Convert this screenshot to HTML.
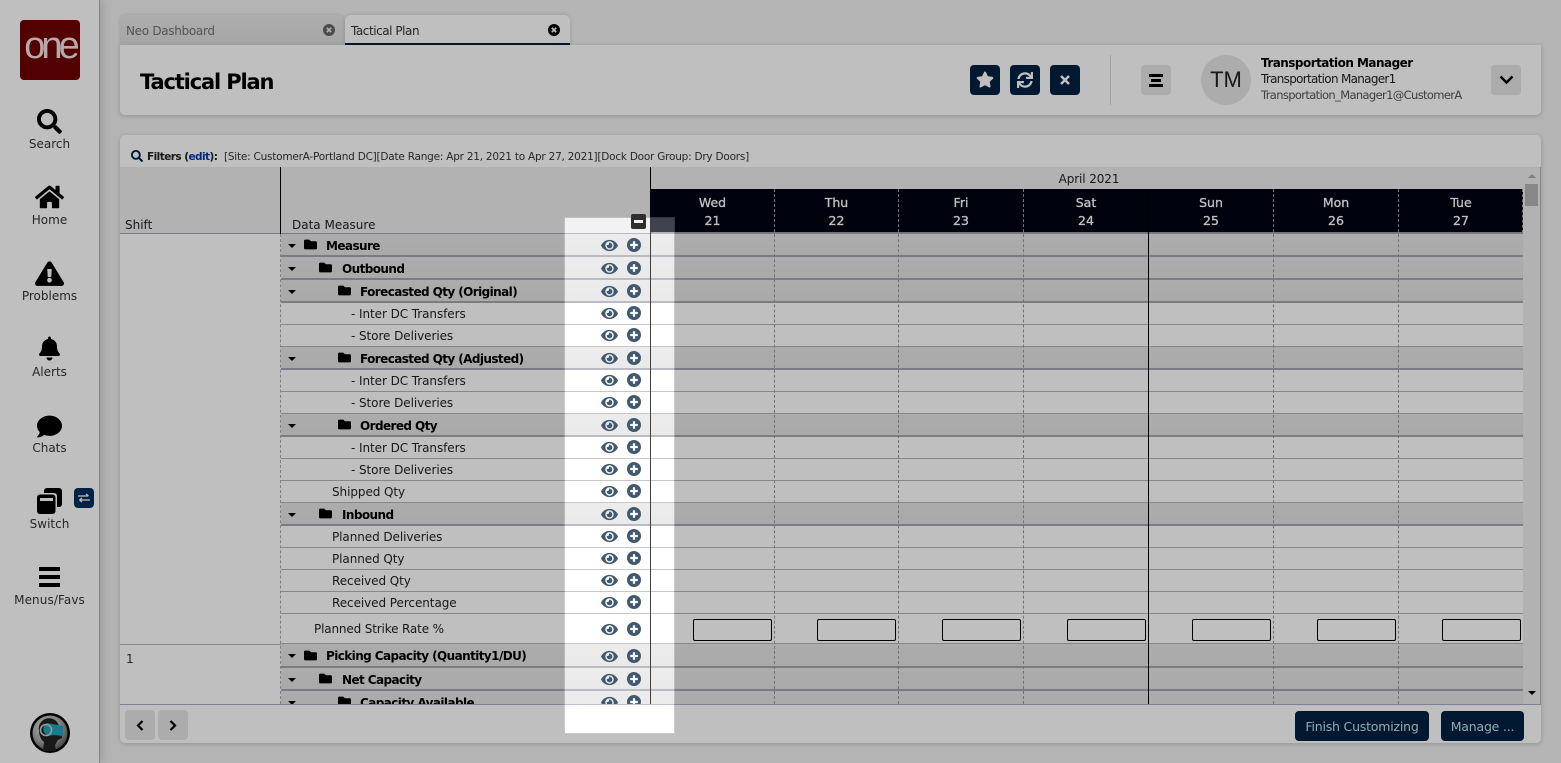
<!DOCTYPE html>
<html><head><meta charset="utf-8"><style>
html,body{margin:0;padding:0;width:1561px;height:763px;overflow:hidden;background:#f0f0f0}
body{position:relative;font-family:"DejaVu Sans","Liberation Sans",sans-serif;font-size:12px;color:#222}
div,svg,b,span,i{position:absolute;box-sizing:border-box}
.nav{left:0;width:99px;text-align:center;color:#333;font-size:12px;line-height:16px}
.ic{fill:#000}
.btn{background:#002040;border-radius:4px;width:30px;height:30px;top:65px}
.gb{background:#e6e6e6;border-radius:4px;width:30px;height:30px}
.r{left:281px;width:1242px;background:#fff;border-bottom:1px solid #b4b4b4;white-space:nowrap;color:#222}
.r span,.r b{top:0;line-height:inherit}
.r span{letter-spacing:-.07px}
.g{background:linear-gradient(#e6e6e6,#e2e2e2);border-bottom:2px solid #a4a4b2}
.g b{color:#000;font-size:12px;letter-spacing:-.58px}
.car{left:7px;width:0;height:0;border:4px solid transparent;border-top:4px solid #000;border-bottom:0}
.ey{left:320px;width:17px;height:15px;fill:#002040}
.pl{left:346px;width:14px;height:14px}
.vl{width:0;top:189px;height:515px;border-left:1px dashed #999}
.ib{top:619px;width:79px;height:22px;border:1px solid #000;border-radius:2px}
.dh{top:189px;height:44px;text-align:center;color:#fff;font-size:12.5px;line-height:18px;padding-top:5px;-webkit-text-stroke:.3px #fff}
</style></head><body>
<svg width="0" height="0" style="left:0;top:0"><defs>
<symbol id="eye" viewBox="0 0 576 512"><path d="M572.52 241.4C518.29 135.59 410.93 64 288 64S57.68 135.64 3.48 241.41a32.35 32.35 0 0 0 0 29.19C57.71 376.41 165.07 448 288 448s230.32-71.64 284.52-177.41a32.35 32.35 0 0 0 0-29.19zM288 400a144 144 0 1 1 144-144 143.93 143.93 0 0 1-144 144zm0-240a95.31 95.31 0 0 0-25.31 3.79 47.85 47.85 0 0 1-66.9 66.9A95.78 95.78 0 1 0 288 160z"/></symbol>
<symbol id="plus" viewBox="0 0 14 14"><circle cx="7" cy="7" r="7" fill="#002040"/><path d="M7 3.2v7.6M3.2 7h7.6" stroke="#fff" stroke-width="2.2"/></symbol>
<symbol id="fold" viewBox="0 0 512 512"><path d="M464 128H272l-64-64H48C21.49 64 0 85.49 0 112v288c0 26.51 21.49 48 48 48h416c26.51 0 48-21.49 48-48V176c0-26.51-21.49-48-48-48z"/></symbol>
</defs></svg>

<!-- sidebar -->
<div style="left:0;top:0;width:100px;height:763px;background:#fff;border-right:1px solid #b0b0b0;box-shadow:3px 0 8px rgba(0,0,0,.12)"></div>
<div style="left:20px;top:20px;width:60px;height:60px;background:#6e0000;border-radius:4px"></div>
<div style="left:20px;top:27px;width:60px;text-align:center;color:#f2e2e2;font-size:38px;line-height:38px;letter-spacing:-4px;font-family:'Liberation Sans',sans-serif">one</div>
<svg class="ic" style="left:37px;top:109px" width="25" height="25" viewBox="0 0 512 512"><path d="M505 442.7L405.3 343c-4.5-4.5-10.6-7-17-7H372c27.6-35.3 44-79.7 44-128C416 93.1 322.9 0 208 0S0 93.1 0 208s93.1 208 208 208c48.3 0 92.7-16.4 128-44v16.3c0 6.4 2.5 12.5 7 17l99.7 99.7c9.4 9.4 24.6 9.4 33.9 0l28.3-28.3c9.4-9.4 9.4-24.6.1-34zM208 336c-70.7 0-128-57.2-128-128 0-70.7 57.2-128 128-128 70.7 0 128 57.2 128 128 0 70.7-57.2 128-128 128z"/></svg>
<div class="nav" style="top:136px">Search</div>
<svg class="ic" style="left:35px;top:184px" width="29" height="26" viewBox="0 0 576 512"><path d="M280.37 148.26L96 300.11V464a16 16 0 0 0 16 16l112.06-.29a16 16 0 0 0 15.92-16V368a16 16 0 0 1 16-16h64a16 16 0 0 1 16 16v95.64a16 16 0 0 0 16 16.05L464 480a16 16 0 0 0 16-16V300L295.67 148.26a12.19 12.19 0 0 0-15.3 0zM571.6 251.47L488 182.56V44.05a12 12 0 0 0-12-12h-56a12 12 0 0 0-12 12v72.61L318.47 43a48 48 0 0 0-61 0L4.34 251.47a12 12 0 0 0-1.6 16.9l25.5 31A12 12 0 0 0 45.15 301l235.22-193.74a12.19 12.19 0 0 1 15.3 0L530.9 301a12 12 0 0 0 16.9-1.6l25.5-31a12 12 0 0 0-1.7-16.93z"/></svg>
<div class="nav" style="top:212px">Home</div>
<svg class="ic" style="left:35px;top:260px" width="29" height="26" viewBox="0 0 576 512"><path d="M569.517 440.013C587.975 472.007 564.806 512 527.94 512H48.054c-36.937 0-59.999-40.055-41.577-71.987L246.423 48.015c18.467-32.009 64.72-31.951 83.154 0l239.94 392zM288 354c-25.405 0-46 20.595-46 46s20.595 46 46 46 46-20.595 46-46-20.595-46-46-46zm-43.673-165.346l7.418 136c.347 6.364 5.609 11.346 11.982 11.346h48.546c6.373 0 11.635-4.982 11.982-11.346l7.418-136c.375-6.874-5.098-12.654-11.982-12.654h-63.383c-6.884 0-12.356 5.78-11.981 12.654z"/></svg>
<div class="nav" style="top:288px">Problems</div>
<svg class="ic" style="left:39px;top:336px" width="21" height="25" viewBox="0 0 448 512"><path d="M224 512c35.32 0 63.97-28.65 63.97-64H160.03c0 35.35 28.65 64 63.97 64zm215.39-149.71c-19.32-20.76-55.47-51.99-55.47-154.29 0-77.7-54.48-139.9-127.94-155.16V32c0-17.67-14.32-32-31.98-32s-31.98 14.33-31.98 32v20.84C118.56 68.1 64.08 130.3 64.08 208c0 102.3-36.15 133.53-55.47 154.29-6 6.45-8.66 14.16-8.61 21.71.11 16.4 12.98 32 32.1 32h383.8c19.12 0 32-15.6 32.1-32 .05-7.55-2.61-15.27-8.61-21.71z"/></svg>
<div class="nav" style="top:364px">Alerts</div>
<svg class="ic" style="left:37px;top:414px" width="25" height="25" viewBox="0 0 512 512"><path d="M256 32C114.6 32 0 125.1 0 240c0 49.6 21.4 95 57 130.7C44.5 421.1 2.7 466 2.2 466.5c-2.2 2.3-2.8 5.7-1.5 8.7S4.8 480 8 480c66.3 0 116-31.8 140.6-51.4 32.7 12.3 69 19.4 107.4 19.4 141.4 0 256-93.1 256-208S397.4 32 256 32z"/></svg>
<div class="nav" style="top:440px">Chats</div>
<svg style="left:37px;top:488px" width="25" height="26" viewBox="0 0 25 26"><rect x="7" y="0" width="18" height="19" rx="3"/><rect x="0" y="5" width="20" height="21" rx="3" fill="#fff"/><rect x="0" y="6.500" width="18.500" height="19.500" rx="3"/><rect x="3" y="10" width="13" height="3" fill="#fff"/></svg>
<div class="nav" style="top:516px">Switch</div>
<div style="left:74px;top:488px;width:20px;height:20px;border-radius:4px;background:#002f5c"></div>
<svg style="left:78px;top:493px" width="12" height="10" viewBox="0 0 12 10" fill="none" stroke="#fff" stroke-width="1.200"><path d="M0 3h10M8 1l2.500 2M12 7H2M4 5L1.500 7M4 9L1.500 7"/></svg>
<svg style="left:39px;top:567px" width="21" height="20"><rect width="21" height="4"/><rect y="8" width="21" height="4"/><rect y="16" width="21" height="4"/></svg>
<div class="nav" style="top:592px;letter-spacing:.1px">Menus/Favs</div>
<svg style="left:30px;top:713px" width="40" height="40" viewBox="0 0 40 40"><defs><radialGradient id="av" cx=".4" cy=".35" r=".7"><stop offset="0" stop-color="#eee"/><stop offset=".6" stop-color="#aaa"/><stop offset="1" stop-color="#555"/></radialGradient></defs><circle cx="20" cy="20" r="20" fill="#050505"/><circle cx="20" cy="20" r="17.500" fill="url(#av)"/><path d="M9 18a10 10 0 0 1 20-5l3 2v10l-4 2-3 5 1 6H13l1-9c-3-2-5-7-5-11z" fill="#222"/><path d="M17 10l16 3v10l-10-1a6.500 6.500 0 0 1-6-12z" fill="#1fa3bd"/><circle cx="16" cy="17" r="5.500" fill="none" stroke="#ccc" stroke-width="1.600"/></svg>

<!-- tabs -->
<div style="left:120px;top:15px;width:224px;height:31px;background:linear-gradient(#e8e8e8,#dcdcdc);border-radius:6px 6px 0 0;box-shadow:0 0 3px rgba(0,0,0,.15)"></div>
<div style="left:126px;top:23px;color:#717171;font-size:12px;line-height:17px;letter-spacing:-.3px">Neo Dashboard</div>
<svg style="left:323px;top:24px" width="12" height="12" viewBox="0 0 12 12"><circle cx="6" cy="6" r="6" fill="#666"/><path d="M3.800 3.800l4.400 4.400M8.200 3.800L3.800 8.200" stroke="#eee" stroke-width="1.700"/></svg>
<div style="left:345px;top:15px;width:225px;height:30px;background:#fff;border-bottom:2px solid #002040;border-radius:6px 6px 0 0;box-shadow:0 0 4px rgba(0,0,0,.15)"></div>
<div style="left:351px;top:23px;color:#333;font-size:12px;line-height:17px;letter-spacing:-.45px">Tactical Plan</div>
<svg style="left:548px;top:24px" width="12" height="12" viewBox="0 0 12 12"><circle cx="6" cy="6" r="6" fill="#000"/><path d="M3.800 3.800l4.400 4.400M8.200 3.800L3.800 8.200" stroke="#fff" stroke-width="1.700"/></svg>

<!-- header panel -->
<div style="left:120px;top:45px;width:1421px;height:70px;background:#fff;border-radius:0 0 5px 5px;box-shadow:0 1px 5px rgba(0,0,0,.18)"></div>
<div style="left:140px;top:67px;font-size:21px;line-height:30px;font-weight:bold;color:#000;letter-spacing:-1.15px">Tactical Plan</div>
<div class="btn" style="left:970px"></div><div class="btn" style="left:1010px"></div><div class="btn" style="left:1050px"></div>
<svg style="left:976px;top:71px" width="18" height="17" viewBox="0 0 576 512" fill="#fff"><path d="M259.3 17.8L194 150.2 47.9 171.5c-26.2 3.8-36.700 36.100-17.700 54.600l105.700 103-25 145.500c-4.500 26.300 23.200 46 46.400 33.700L288 439.600l130.700 68.700c23.200 12.200 50.900-7.400 46.400-33.700l-25-145.500 105.700-103c19-18.500 8.500-50.800-17.700-54.600L382 150.200 316.700 17.800c-11.700-23.600-45.600-23.900-57.400 0z"/></svg>
<svg style="left:1017px;top:72px" width="16" height="16" viewBox="0 0 512 512" fill="#fff"><path d="M440.65 12.57l4 82.77A247.16 247.16 0 0 0 255.83 8C134.73 8 33.91 94.92 12.29 209.82A12 12 0 0 0 24.09 224h49.05a12 12 0 0 0 11.67-9.26 175.91 175.91 0 0 1 317-56.94l-101.46-4.86a12 12 0 0 0-12.57 12v47.41a12 12 0 0 0 12 12H500a12 12 0 0 0 12-12V12a12 12 0 0 0-12-12h-47.37a12 12 0 0 0-11.98 12.57zM255.83 432a175.61 175.61 0 0 1-146-77.8l101.8 4.87a12 12 0 0 0 12.57-12v-47.4a12 12 0 0 0-12-12H12a12 12 0 0 0-12 12V500a12 12 0 0 0 12 12h47.35a12 12 0 0 0 12-12.6l-4.15-82.57A247.17 247.17 0 0 0 255.83 504c121.11 0 221.93-86.92 243.55-201.82a12 12 0 0 0-11.8-14.18h-49.05a12 12 0 0 0-11.67 9.26A175.86 175.86 0 0 1 255.83 432z"/></svg>
<svg style="left:1059px;top:74px" width="12" height="12" viewBox="0 0 12 12"><path d="M2 2l8 8M10 2l-8 8" stroke="#fff" stroke-width="2.600"/></svg>
<div style="left:1110px;top:55px;width:1px;height:50px;background:#d8d8d8"></div>
<div class="gb" style="left:1141px;top:65px"></div>
<svg style="left:1149px;top:74px" width="14" height="13"><rect width="14" height="3"/><rect x="2" y="5" width="10" height="3"/><rect y="10" width="14" height="3"/></svg>
<div style="left:1201px;top:55px;width:50px;height:50px;border-radius:50%;background:#e6e6e6;text-align:center;line-height:50px;font-size:22px;color:#222;font-family:'Liberation Sans',sans-serif">TM</div>
<div style="left:1261px;top:55px;font-size:12px;line-height:17px;font-weight:bold;color:#000;white-space:nowrap;letter-spacing:-.53px">Transportation Manager</div>
<div style="left:1261px;top:71px;font-size:12px;line-height:17px;color:#222;white-space:nowrap;letter-spacing:-.7px">Transportation Manager1</div>
<div style="left:1261px;top:87px;font-size:11.500px;line-height:17px;color:#555;white-space:nowrap;letter-spacing:-.64px">Transportation_Manager1@CustomerA</div>
<div class="gb" style="left:1491px;top:65px"></div>
<svg style="left:1499px;top:75px" width="15" height="10" viewBox="0 0 15 10" fill="none" stroke="#000" stroke-width="2.500"><path d="M1.500 1.500l6 6 6-6"/></svg>

<!-- main panel -->
<div style="left:120px;top:135px;width:1421px;height:608px;background:#fff;border-radius:5px;box-shadow:0 1px 5px rgba(0,0,0,.18)"></div>
<svg style="left:131px;top:150px" width="12" height="12" viewBox="0 0 512 512" fill="#002040"><path d="M505 442.7L405.3 343c-4.500-4.500-10.600-7-17-7H372c27.600-35.300 44-79.700 44-128C416 93.100 322.900 0 208 0S0 93.100 0 208s93.100 208 208 208c48.300 0 92.700-16.400 128-44v16.300c0 6.400 2.500 12.500 7 17l99.700 99.700c9.400 9.400 24.600 9.400 33.900 0l28.300-28.300c9.400-9.400 9.400-24.600.1-34zM208 336c-70.700 0-128-57.200-128-128 0-70.700 57.200-128 128-128 70.700 0 128 57.200 128 128 0 70.700-57.200 128-128 128z"/></svg>
<div style="left:147px;top:149px;font-size:10.500px;line-height:16px;font-weight:bold;color:#222;white-space:nowrap;letter-spacing:-.55px">Filters (<span style="position:static;color:#0033aa">edit</span>):</div>
<div style="left:224px;top:149px;font-size:10.500px;line-height:16px;color:#333;white-space:nowrap;letter-spacing:-.23px">[Site: CustomerA-Portland DC][Date Range: Apr 21, 2021 to Apr 27, 2021][Dock Door Group: Dry Doors]</div>

<!-- table -->
<div style="left:0;top:0;width:1561px;height:763px;clip-path:inset(0 0 59px 0)">
<div style="left:120px;top:167px;width:1403px;height:67px;background:#eee;border-bottom:1px solid #a6a6b0"></div>
<div style="left:653px;top:171px;width:872px;text-align:center;font-size:12px;line-height:17px;color:#222;letter-spacing:-.1px">April 2021</div>
<div style="left:651px;top:189px;width:872px;height:44px;background:#000513;border-bottom:1px solid #999"></div>
<div class="dh" style="left:651px;width:123px">Wed<br>21</div>
<div class="dh" style="left:775px;width:123px">Thu<br>22</div>
<div class="dh" style="left:899px;width:124px">Fri<br>23</div>
<div class="dh" style="left:1024px;width:124px">Sat<br>24</div>
<div class="dh" style="left:1149px;width:124px">Sun<br>25</div>
<div class="dh" style="left:1274px;width:124px">Mon<br>26</div>
<div class="dh" style="left:1399px;width:124px">Tue<br>27</div>
<div style="left:125px;top:217px;line-height:17px;color:#222">Shift</div>
<div style="left:292px;top:217px;line-height:17px;color:#222">Data Measure</div>
<div style="left:126px;top:651px;line-height:17px;color:#333">1</div>

<div class="r g" style="top:234px;height:23px;line-height:24px"><i class="car" style="top:10px"></i><svg fill="#000" style="left:23px;top:4px" width="13" height="13"><use href="#fold"/></svg><b style="left:45px">Measure</b><svg class="ey" style="top:3.500px"><use href="#eye"/></svg><svg class="pl" style="top:4px"><use href="#plus"/></svg></div>
<div class="r g" style="top:257px;height:23px;line-height:24px"><i class="car" style="top:10px"></i><svg fill="#000" style="left:38px;top:4px" width="13" height="13"><use href="#fold"/></svg><b style="left:61px">Outbound</b><svg class="ey" style="top:3.500px"><use href="#eye"/></svg><svg class="pl" style="top:4px"><use href="#plus"/></svg></div>
<div class="r g" style="top:280px;height:23px;line-height:24px"><i class="car" style="top:10px"></i><svg fill="#000" style="left:57px;top:4px" width="13" height="13"><use href="#fold"/></svg><b style="left:79px">Forecasted Qty (Original)</b><svg class="ey" style="top:3.500px"><use href="#eye"/></svg><svg class="pl" style="top:4px"><use href="#plus"/></svg></div>
<div class="r" style="top:303px;height:22px;line-height:23px"><span style="left:70px">- Inter DC Transfers</span><svg class="ey" style="top:2.500px"><use href="#eye"/></svg><svg class="pl" style="top:3px"><use href="#plus"/></svg></div>
<div class="r" style="top:325px;height:22px;line-height:23px"><span style="left:70px">- Store Deliveries</span><svg class="ey" style="top:2.500px"><use href="#eye"/></svg><svg class="pl" style="top:3px"><use href="#plus"/></svg></div>
<div class="r g" style="top:347px;height:23px;line-height:24px"><i class="car" style="top:10px"></i><svg fill="#000" style="left:57px;top:4px" width="13" height="13"><use href="#fold"/></svg><b style="left:79px">Forecasted Qty (Adjusted)</b><svg class="ey" style="top:3.500px"><use href="#eye"/></svg><svg class="pl" style="top:4px"><use href="#plus"/></svg></div>
<div class="r" style="top:370px;height:22px;line-height:23px"><span style="left:70px">- Inter DC Transfers</span><svg class="ey" style="top:2.500px"><use href="#eye"/></svg><svg class="pl" style="top:3px"><use href="#plus"/></svg></div>
<div class="r" style="top:392px;height:22px;line-height:23px"><span style="left:70px">- Store Deliveries</span><svg class="ey" style="top:2.500px"><use href="#eye"/></svg><svg class="pl" style="top:3px"><use href="#plus"/></svg></div>
<div class="r g" style="top:414px;height:23px;line-height:24px"><i class="car" style="top:10px"></i><svg fill="#000" style="left:57px;top:4px" width="13" height="13"><use href="#fold"/></svg><b style="left:79px">Ordered Qty</b><svg class="ey" style="top:3.500px"><use href="#eye"/></svg><svg class="pl" style="top:4px"><use href="#plus"/></svg></div>
<div class="r" style="top:437px;height:22px;line-height:23px"><span style="left:70px">- Inter DC Transfers</span><svg class="ey" style="top:2.500px"><use href="#eye"/></svg><svg class="pl" style="top:3px"><use href="#plus"/></svg></div>
<div class="r" style="top:459px;height:22px;line-height:23px"><span style="left:70px">- Store Deliveries</span><svg class="ey" style="top:2.500px"><use href="#eye"/></svg><svg class="pl" style="top:3px"><use href="#plus"/></svg></div>
<div class="r" style="top:481px;height:22px;line-height:23px"><span style="left:51px">Shipped Qty</span><svg class="ey" style="top:2.500px"><use href="#eye"/></svg><svg class="pl" style="top:3px"><use href="#plus"/></svg></div>
<div class="r g" style="top:503px;height:23px;line-height:24px"><i class="car" style="top:10px"></i><svg fill="#000" style="left:38px;top:4px" width="13" height="13"><use href="#fold"/></svg><b style="left:61px">Inbound</b><svg class="ey" style="top:3.500px"><use href="#eye"/></svg><svg class="pl" style="top:4px"><use href="#plus"/></svg></div>
<div class="r" style="top:526px;height:22px;line-height:23px"><span style="left:51px">Planned Deliveries</span><svg class="ey" style="top:2.500px"><use href="#eye"/></svg><svg class="pl" style="top:3px"><use href="#plus"/></svg></div>
<div class="r" style="top:548px;height:22px;line-height:23px"><span style="left:51px">Planned Qty</span><svg class="ey" style="top:2.500px"><use href="#eye"/></svg><svg class="pl" style="top:3px"><use href="#plus"/></svg></div>
<div class="r" style="top:570px;height:22px;line-height:23px"><span style="left:51px">Received Qty</span><svg class="ey" style="top:2.500px"><use href="#eye"/></svg><svg class="pl" style="top:3px"><use href="#plus"/></svg></div>
<div class="r" style="top:592px;height:22px;line-height:23px"><span style="left:51px">Received Percentage</span><svg class="ey" style="top:2.500px"><use href="#eye"/></svg><svg class="pl" style="top:3px"><use href="#plus"/></svg></div>
<div class="r" style="top:614px;height:30px;line-height:31px"><span style="left:33px;letter-spacing:-.15px">Planned Strike Rate %</span><svg class="ey" style="top:7.500px"><use href="#eye"/></svg><svg class="pl" style="top:8px"><use href="#plus"/></svg></div>
<div class="r g" style="top:644px;height:24px;line-height:25px"><i class="car" style="top:10px"></i><svg fill="#000" style="left:23px;top:5px" width="13" height="13"><use href="#fold"/></svg><b style="left:45px">Picking Capacity (Quantity1/DU)</b><svg class="ey" style="top:4.500px"><use href="#eye"/></svg><svg class="pl" style="top:5px"><use href="#plus"/></svg></div>
<div class="r g" style="top:668px;height:23px;line-height:24px"><i class="car" style="top:10px"></i><svg fill="#000" style="left:38px;top:4px" width="13" height="13"><use href="#fold"/></svg><b style="left:61px">Net Capacity</b><svg class="ey" style="top:3.500px"><use href="#eye"/></svg><svg class="pl" style="top:4px"><use href="#plus"/></svg></div>
<div class="r g" style="top:691px;height:23px;line-height:24px"><i class="car" style="top:10px"></i><svg fill="#000" style="left:57px;top:4px" width="13" height="13"><use href="#fold"/></svg><b style="left:79px">Capacity Available</b><svg class="ey" style="top:3.500px"><use href="#eye"/></svg><svg class="pl" style="top:4px"><use href="#plus"/></svg></div>

<div class="ib" style="left:693px"></div><div class="ib" style="left:817px"></div><div class="ib" style="left:942px"></div><div class="ib" style="left:1067px"></div><div class="ib" style="left:1192px"></div><div class="ib" style="left:1317px"></div><div class="ib" style="left:1442px"></div>

<div class="vl" style="left:774px"></div><div class="vl" style="left:898px"></div><div class="vl" style="left:1023px"></div><div class="vl" style="left:1273px"></div><div class="vl" style="left:1398px"></div><div class="vl" style="left:1522px;height:44px"></div>
<div style="left:1148px;top:189px;width:1px;height:515px;background:#000"></div>
<div style="left:280px;top:234px;width:0;height:470px;border-left:1px dashed #aaa"></div>
<div style="left:280px;top:167px;width:1px;height:67px;background:#000"></div>
<div style="left:650px;top:167px;width:1px;height:537px;background:#000"></div>
<div style="left:120px;top:644px;width:161px;height:1px;background:#b4b4b4"></div>

<div style="left:1523px;top:167px;width:17px;height:537px;background:#eee"></div>
<div style="left:1525px;top:184px;width:13px;height:22px;background:#b4b4b4"></div>
<div style="left:1528px;top:174px;width:0;height:0;border:4px solid transparent;border-bottom:4px solid #aaa;border-top:0"></div>
<div style="left:1528px;top:691px;width:0;height:0;border:4px solid transparent;border-top:4px solid #000;border-bottom:0"></div>
</div>
<div style="left:1540px;top:167px;width:1px;height:538px;background:#b0b0c4"></div>
<div style="left:120px;top:704px;width:1421px;height:1px;background:#a8adc4"></div>

<!-- footer -->
<div class="gb" style="left:125px;top:710px"></div><div class="gb" style="left:158px;top:710px"></div>
<svg style="left:136px;top:720px" width="8" height="11" viewBox="0 0 8 11" fill="none" stroke="#000" stroke-width="2.200"><path d="M6.500 1L2 5.500l4.500 4.500"/></svg>
<svg style="left:169px;top:720px" width="8" height="11" viewBox="0 0 8 11" fill="none" stroke="#000" stroke-width="2.200"><path d="M1.500 1L6 5.500 1.500 10"/></svg>
<div style="left:1295px;top:711px;width:134px;height:30px;background:#002040;border-radius:4px;color:#c4e2ec;text-align:center;line-height:32px;font-size:12.500px;white-space:nowrap;letter-spacing:-.2px">Finish Customizing</div>
<div style="left:1441px;top:711px;width:83px;height:30px;background:#002040;border-radius:4px;color:#c4e2ec;text-align:center;line-height:32px;font-size:12.500px;white-space:nowrap;letter-spacing:-.2px">Manage ...</div>

<!-- overlay + spotlight -->
<div style="left:565px;top:218px;width:109px;height:515px;background:rgba(255,255,255,.25);box-shadow:0 0 0 3000px rgba(0,0,0,.25);outline:1px solid rgba(255,255,255,.2);z-index:10"></div>
<div style="left:631px;top:214px;width:15px;height:15px;background:#2e2e2e;border-radius:2px;z-index:11"></div>
<div style="left:634px;top:220px;width:9px;height:3px;background:#eee;z-index:12"></div>
</body></html>
